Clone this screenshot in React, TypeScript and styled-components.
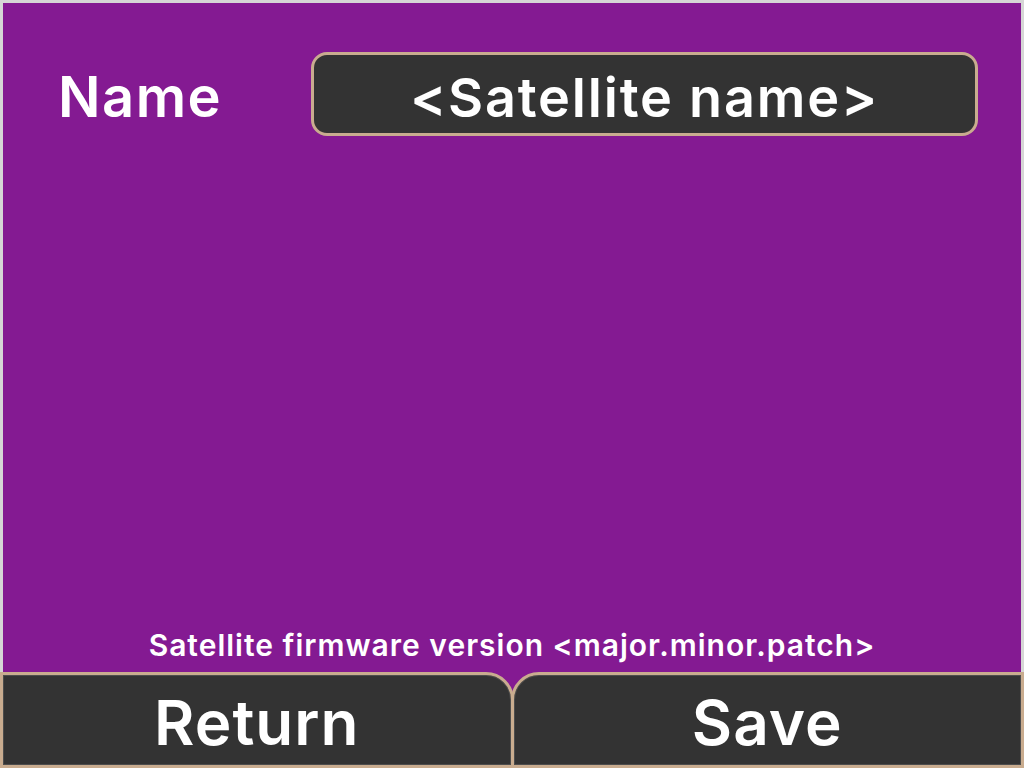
import React from "react";
import styled, { createGlobalStyle } from "styled-components";

const Global = createGlobalStyle`
  html, body { margin: 0; padding: 0; background: #d6d6d6; }
  body { font-family: Inter, "Noto Sans", sans-serif; }
  * { box-sizing: border-box; }
`;

const Screen = styled.div`
  width: 1024px;
  height: 768px;
  display: flex;
  flex-direction: column;
  background: #d6d6d6;
  overflow: hidden;
`;

const Panel = styled.div`
  flex: 1;
  margin: 3px 3px 0 3px;
  background: #841a92;
  display: flex;
  flex-direction: column;
  padding: 49px 43px 12px 55px;
`;

const Row = styled.div`
  display: grid;
  grid-template-columns: 253px 1fr;
  align-items: center;
`;

const Label = styled.div`
  color: #ffffff;
  font-size: 56px;
  font-weight: 600;
  letter-spacing: 1.5px;
  line-height: 1;
  padding-top: 6px;
`;

const NameBox = styled.div`
  height: 84px;
  border: 3px solid #c9ac8f;
  border-radius: 16px;
  background: #333333;
  color: #ffffff;
  font-size: 54px;
  font-weight: 600;
  letter-spacing: 1.8px;
  display: flex;
  align-items: center;
  justify-content: center;
  padding-top: 6px;
`;

const Spacer = styled.div`
  flex: 1;
`;

const Version = styled.div`
  color: #ffffff;
  font-size: 30px;
  font-weight: 600;
  letter-spacing: 1px;
  text-align: center;
  line-height: 1;
  padding-right: 12px;
`;

const Footer = styled.div`
  height: 96px;
  display: flex;
  background: #841a92;
`;

const Button = styled.button<{ $side: "left" | "right" }>`
  flex: 1;
  height: 96px;
  margin: 0;
  margin-left: ${(p) => (p.$side === "right" ? "-3px" : "0")};
  border: 3px solid #c9ac8f;
  border-top-right-radius: ${(p) => (p.$side === "left" ? "28px" : "0")};
  border-top-left-radius: ${(p) => (p.$side === "right" ? "28px" : "0")};
  background: #333333;
  box-shadow: inset 0 0 0 1px #4d4d4d;
  color: #ffffff;
  font-family: Inter, "Noto Sans", sans-serif;
  font-size: 62px;
  font-weight: 600;
  letter-spacing: 1px;
  display: flex;
  align-items: center;
  justify-content: center;
  padding: 4px 0 0 0;
  cursor: pointer;
`;

export default function App() {
  return (
    <Screen>
      <Global />
      <Panel>
        <Row>
          <Label>Name</Label>
          <NameBox>&lt;Satellite name&gt;</NameBox>
        </Row>
        <Spacer />
        <Version>Satellite firmware version &lt;major.minor.patch&gt;</Version>
      </Panel>
      <Footer>
        <Button $side="left">Return</Button>
        <Button $side="right">Save</Button>
      </Footer>
    </Screen>
  );
}
